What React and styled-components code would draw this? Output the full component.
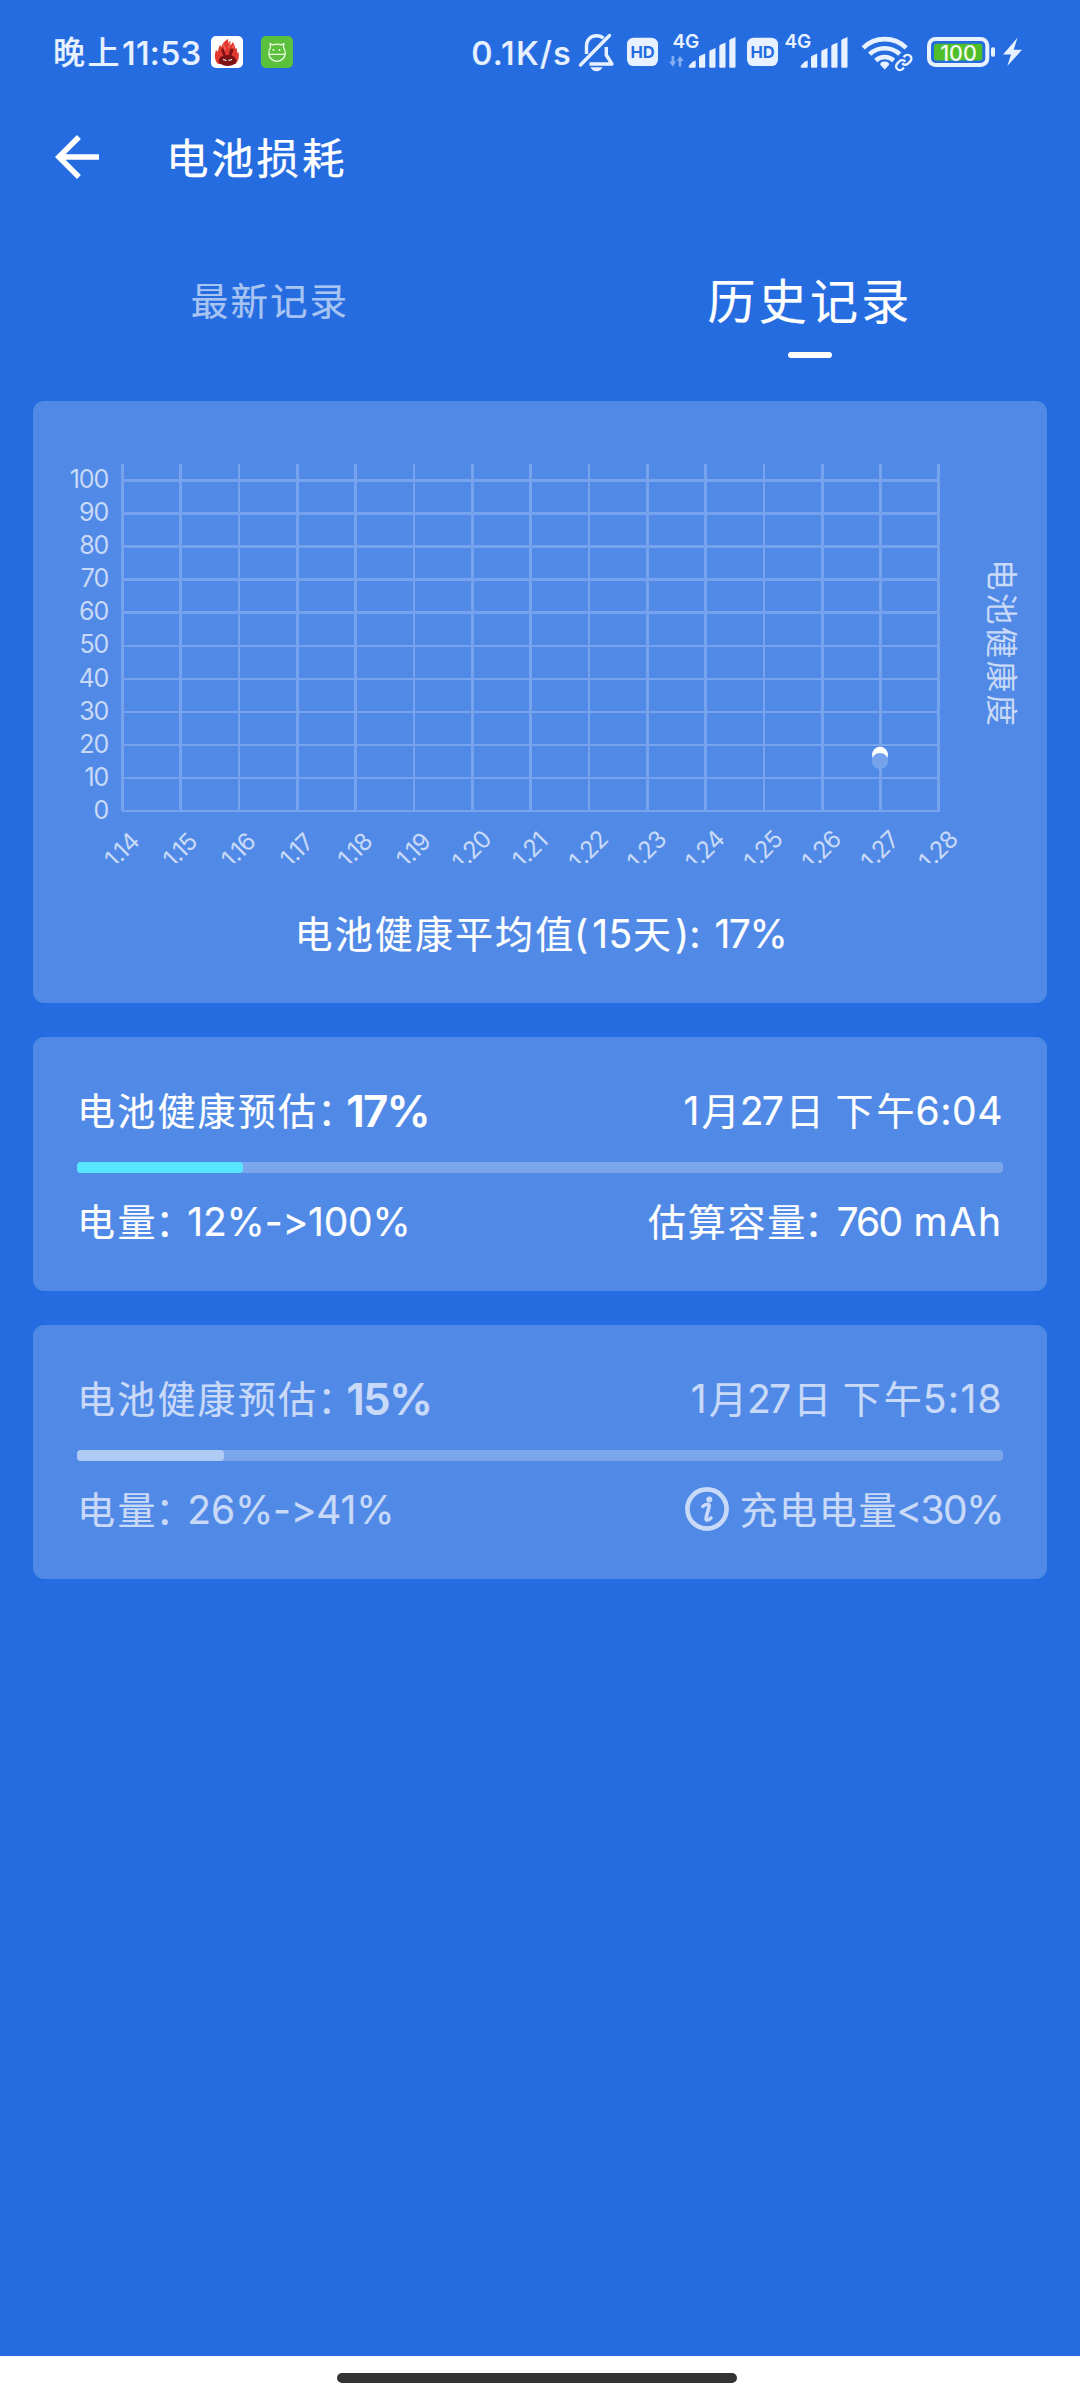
import React from 'react';
import styled, { createGlobalStyle } from 'styled-components';

const records = [
  {
    id: 1,
    health: '17%',
    fill: 17.9,
    hour: '6:04',
    hourGap: 0.56,
    from: '12%',
    to: '100%',
    capacity: '760',
  },
  {
    id: 2,
    health: '15%',
    fill: 15.9,
    hour: '5:18',
    hourGap: 1.3,
    from: '26%',
    to: '41%',
    dim: true,
  },
];

const days = [14, 15, 16, 17, 18, 19, 20, 21, 22, 23, 24, 25, 26, 27, 28];
const levels = [0, 10, 20, 30, 40, 50, 60, 70, 80, 90, 100];

// chart space: left/top of the card is 0,0
const xOf = (i) => 89.45 + i * 58.31;
const yOf = (v) => 410.19 - v * 3.307;

const HealthChart = () => {
  return (
    <ChartSvg width="945" height="462" viewBox="0 0 945 462">
      <g fill="none" stroke="#76a2ee" shapeRendering="crispEdges">
        {levels.map((v) => (
          <path key={v} d={`M${xOf(0)} ${yOf(v)}H${xOf(14) + 1}`} strokeWidth="2.6" />
        ))}
        {days.map((d, i) => (
          <path key={d} d={`M${xOf(i)} 63V410`} strokeWidth="2.7" />
        ))}
      </g>
      {levels.map((v) => (
        <AxisText key={v} x="75.2" y={yOf(v) + 7.6} textAnchor="end" $size={25} $gap={-1.1}>{v}</AxisText>
      ))}
      {days.map((d, i) => (
        <AxisText
          key={d}
          y="8.7"
          textAnchor="middle"
          $size={24}
          $gap={-0.8}
          transform={`translate(${xOf(i) - 1} 449) rotate(-45)`}
        >
          {`1.${d}`}
        </AxisText>
      ))}
      <circle cx="847" cy="353.8" r="8" fill="#fff" />
      <circle cx="847" cy="360" r="8" fill="#76a2ec" />
    </ChartSvg>
  );
};

const Hd = ({ left }) => (
  <StatusIcon $left={left} width="31" height="40" viewBox="0 0 31 40">
    <rect y="4.7" width="31" height="28.4" rx="6.5" fill="#e8f1ff" />
    <HdText x="15.6" y="25" textAnchor="middle">HD</HdText>
  </StatusIcon>
);

const Signal = ({ left, data }) => (
  <StatusIcon $left={left} width="68" height="40" viewBox="0 0 68 40">
    <NetText x="4.4" y="15.2">4G</NetText>
    {data && (
      <g fill="#85aff2">
        <path d="M3.6 23h2.600v5.500h1.800L4.900 33.700 1 28.500h2.600z" />
        <path d="M10.600 33.600h2.600v-5.500h2.600L11.900 23 8.800 28.100h1.800z" />
      </g>
    )}
    <g fill="#e8f1ff">
      <path d="M20.7 33l3.800-4.300 3.200-1.200v6.200q0 1-1 1h-5q-1 0-1-1z" />
      <path d="M31 24.500q0-1.300 1-1.800l5.200-2.200v13.200q0 1-1 1H32q-1 0-1-1z" />
      <path d="M41.300 19q0-1.300 1-1.800l5.200-2.200v18.700q0 1-1 1h-4.200q-1 0-1-1z" />
      <path d="M51.300 13.500q0-1.300 1-1.800l5.200-2.200v24.200q0 1-1 1h-4.200q-1 0-1-1z" />
      <path d="M61.300 8q0-1.300 1-1.800l5.200-2.200v29.700q0 1-1 1h-4.200q-1 0-1-1z" />
    </g>
  </StatusIcon>
);

const StatusBar = () => {
  return (
    <Status>
      <Run $size={32} $gap={2.5} $weight={500}>晚上</Run>
      <Run $size={33} $gap={0.2} $weight={500}>11:53</Run>
      <AppBadge $bg="#fff" $left={9.5}>
        <svg width="32" height="32" viewBox="0 0 32 32">
          <path d="M7 28C3 24 3.500 18 5 14l2 2c0-3 1-5 2-7l1.500 2C11 8 13 5 17 3c-.5 3 1 5 3 6l1.500-3c2 2 2.500 5 3 7l1-1c1 2 .5 4 .5 5l1.500-1c1 5 0 9-3 12z" fill="#e2382f" />
          <path d="M12 8l2 4-2 6M19 5l-1 7M23 9l-3 6" stroke="#f0675c" strokeWidth="1.4" fill="none" />
          <path d="M10.500 12.500c2-1 3 1.500 4 6.500h3.500c0-5 2-7.500 4-6 1 2-1 4-1.500 6.500 3.500 1 5.500 4 4.500 7-3 4.500-13.500 4.500-17 0C7 23.500 9.500 20.500 12.500 19.500c-1-2-2.500-4-2-7z" fill="#7c1216" />
          <path d="M12 23.500l3.500 1M21 23.500l-3.500 1" stroke="#fff" strokeWidth="1.3" />
        </svg>
      </AppBadge>
      <AppBadge $bg="#5bc13c" $left={18}>
        <svg width="32" height="32" viewBox="0 0 32 32" fill="none" stroke="#effbe9" strokeWidth="1.3">
          <path d="M9.500 11.500L9.200 7.800l2.600 1q4.200-1.500 8.400 0l2.600-1-.3 3.700q2 3 1.700 6A8.200 7.800 0 0 1 7.800 17.500q-.2-3 1.700-6z" />
          <path d="M8 18.300h16" />
          <circle cx="12.5" cy="14" r="1" fill="#effbe9" stroke="none" />
          <circle cx="18.5" cy="14" r="1" fill="#effbe9" stroke="none" />
        </svg>
      </AppBadge>

      <Spacer />

      <Run $size={33} $gap={1.15} $weight={500}>0.1K/s</Run>
      {/* muted bell */}
      <StatusIcon $left={6} width="37" height="40" viewBox="578 33 37 40" fill="none" stroke="#e8f1ff" strokeWidth="3.4">
        <path d="M586.500 54V45.500C586.500 39.500 591 35.800 596.500 35.800q4.500 0 7 2.500" />
        <path d="M606.300 47v8l5.700 9h-22.500" strokeLinejoin="round" />
        <path d="M609.500 35.500L580.500 65" strokeLinecap="round" />
        <path d="M590.500 67.200h12q-2 4-6 4t-6-4z" fill="#e8f1ff" stroke="none" />
      </StatusIcon>
      <Hd left={12} />
      <Signal left={10} data />
      <Hd left={11} />
      <Signal left={2} />
      <StatusIcon $left={13} width="52" height="40" viewBox="861 33 52 40" fill="none" stroke="#e8f1ff">
        <path d="M863.200 47.800a31 31 0 0 1 43 0" strokeWidth="4.6" />
        <path d="M869.600 54.200a22 22 0 0 1 30.200 0" strokeWidth="4.6" />
        <path d="M875.700 60.500a13.500 13.500 0 0 1 18 0" strokeWidth="4.4" />
        <path d="M884.700 69.500l-4.500-4.800q0-3.200 4.500-3.200t4.500 3.200z" fill="#e8f1ff" stroke="none" />
        <g transform="translate(894.5 53.2) scale(.77)" strokeWidth="3">
          <path d="M10 13a5 5 0 0 0 7.540.54l3-3a5 5 0 0 0-7.070-7.070l-1.720 1.710" />
          <path d="M14 11a5 5 0 0 0-7.540-.54l-3 3a5 5 0 0 0 7.070 7.070l1.710-1.710" />
        </g>
      </StatusIcon>
      <StatusIcon $left={13} width="70" height="40" viewBox="926 33 70 40">
        <rect x="929" y="38.9" width="58.3" height="26" rx="6.5" fill="none" stroke="#e8f1ff" strokeWidth="4" />
        <rect x="934" y="43.7" width="48.3" height="16.7" rx="2.5" fill="#50be29" />
        <rect x="991" y="47.3" width="4" height="9.4" rx="1.6" fill="#e8f1ff" />
        <BatteryText x="958.5" y="60.8" textAnchor="middle">100</BatteryText>
      </StatusIcon>
      <StatusIcon $left={6} width="21" height="40" viewBox="1002 33 21 40">
        <path d="M1017.500 37.700L1003 54.500h8l-3.700 11.500L1022 49.800h-8.300z" fill="#e8f1ff" />
      </StatusIcon>
    </Status>
  );
};

const Record = ({ record }) => {
  return (
    <RecordCard $dim={record.dim}>
      <Line>
        <div>
          <Run $gap={2.2}>电池健康预估</Run>
          <Colon $lead={-1}>：</Colon>
          <Percent>{record.health}</Percent>
        </div>
        <div>
          <Run $size={39}>1</Run>
          <Run $lead={2.4}>月</Run>
          <Run $size={39} $gap={-1.9}>27</Run>
          <Run $lead={4}>日 </Run>
          <Run $gap={3} $lead={1}>下午</Run>
          <Run $size={39} $gap={record.hourGap} $lead={-2}>{record.hour}</Run>
        </div>
      </Line>
      <Track>
        <Fill $dim={record.dim} style={{ width: `${record.fill}%` }} />
      </Track>
      <Line>
        <div>
          <Run $gap={2.4}>电量</Run>
          <Colon $lead={-2.5}>：</Colon>
          <Run $size={39} $gap={-0.2} $lead={13}>{record.from}-&gt;{record.to}</Run>
        </div>
        {record.capacity ? (
          <div>
            <Run $gap={1.7}>估算容量</Run>
            <Colon $lead={-3}>：</Colon>
            <Run $size={39} $gap={-1.8} $lead={13.5}>{record.capacity} </Run>
            <Run $size={39} $gap={1.8} $lead={3}>mAh</Run>
          </div>
        ) : (
          <div>
            <InfoIcon width="44" height="44" viewBox="0 0 44 44">
              <circle cx="22" cy="22" r="19.6" fill="none" stroke="currentColor" strokeWidth="4.6" />
              <circle cx="24.3" cy="12.4" r="3" fill="currentColor" />
              <path d="M17.800 19.400q3-2.600 5.400-2 1.400.700.700 3.200l-2.500 8.800q-.800 3 .5 3.600 1.600.400 4-2" fill="none" stroke="currentColor" strokeWidth="3.6" strokeLinecap="round" />
            </InfoIcon>
            <Run $gap={1.7}>充电电量</Run>
            <Run $size={39} $gap={-1.5} $lead={-2}>&lt;30%</Run>
          </div>
        )}
      </Line>
    </RecordCard>
  );
};

const App = () => {
  return (
    <Page>
      <GlobalStyle />
      <StatusBar />
      <Header>
        <BackIcon width="66" height="66" viewBox="0 0 24 24">
          <path d="M20 11H7.830l5.590-5.590L12 4l-8 8 8 8 1.410-1.410L7.830 13H20v-2z" fill="#fff" />
        </BackIcon>
        <Title>电池损耗</Title>
      </Header>
      <Tabs>
        <Tab>最新记录</Tab>
        <Tab $active>历史记录</Tab>
      </Tabs>
      <Content>
        <ChartCard>
          <ChartRow>
            <HealthChart />
            <SideLabel>电池健康度</SideLabel>
          </ChartRow>
          <Average>
            <Run $gap={2.1}>电池健康平均值</Run>
            <Run $size={39} $lead={-1.4}>(</Run>
            <Run $size={39} $gap={0.6} $lead={4}>15</Run>
            <Run>天</Run>
            <Run $size={39} $lead={4}>): </Run>
            <Run $size={39} $gap={-1.4} $lead={3}>17%</Run>
          </Average>
        </ChartCard>
        {records.map((record) => (
          <Record key={record.id} record={record} />
        ))}
      </Content>
      <NavBar>
        <Pill />
      </NavBar>
    </Page>
  );
};

const GlobalStyle = createGlobalStyle`
  body {
    margin: 0;
    background: #256ce0;
  }
  * {
    box-sizing: border-box;
  }
`;
const Page = styled.div`
  display: flex;
  flex-direction: column;
  width: 1080px;
  height: 2400px;
  background: #256ce0;
  color: #fff;
  font-family: Inter, 'Noto Sans CJK SC', sans-serif;
  font-feature-settings: 'calt' 0, 'liga' 0;
  white-space: pre;
`;
const Run = styled.span`
  margin-left: ${(p) => p.$lead || 0}px;
  font-size: ${(p) => p.$size || 38}px;
  font-weight: ${(p) => p.$weight || 400};
  letter-spacing: ${(p) => p.$gap || 0}px;
  line-height: 0;
  -webkit-text-stroke: 0.15px currentColor;
`;
const Colon = styled(Run)`
  font-feature-settings: 'halt' 1;
`;
const Status = styled.div`
  display: flex;
  align-items: center;
  height: 106px;
  padding: 0 57px 0 53px;
  color: #e8f1ff;
`;
const Spacer = styled.div`
  flex: 1;
`;
const StatusIcon = styled.svg`
  flex: none;
  margin-left: ${(p) => p.$left}px;
  overflow: visible;
`;
const AppBadge = styled.div`
  flex: none;
  width: 32px;
  height: 32px;
  margin-left: ${(p) => p.$left}px;
  margin-bottom: 2px;
  border-radius: 5px;
  background: ${(p) => p.$bg};
  overflow: hidden;
`;
const HdText = styled.text`
  fill: #256ce0;
  font-size: 16.5px;
  font-weight: 700;
`;
const NetText = styled.text`
  fill: #e8f1ff;
  font-size: 19px;
  font-weight: 600;
`;
const BatteryText = styled.text`
  fill: #f2fbef;
  font-size: 21.5px;
  font-weight: 500;
`;
const Header = styled.div`
  display: flex;
  align-items: center;
  height: 104px;
  padding-left: 44px;
`;
const BackIcon = styled.svg`
  margin-bottom: 2px;
`;
const Title = styled.div`
  margin-left: 56px;
  padding-top: 1px;
  font-size: 42.5px;
  letter-spacing: 2.8px;
  line-height: 60px;
  -webkit-text-stroke: 0.25px currentColor;
`;
const Tabs = styled.div`
  display: flex;
  height: 191px;
  padding-top: 62px;
`;
const Tab = styled.div`
  display: flex;
  flex-direction: column;
  align-items: center;
  width: 540px;
  font-size: ${(p) => (p.$active ? 48 : 37.5)}px;
  letter-spacing: ${(p) => (p.$active ? 3.2 : 2.1)}px;
  line-height: 60px;
  color: ${(p) => (p.$active ? '#fff' : '#a8c4f3')};
  -webkit-text-stroke: 0.2px currentColor;
  &::after {
    content: '';
    display: ${(p) => (p.$active ? 'block' : 'none')};
    width: 44px;
    height: 6px;
    margin-top: 20px;
    border-radius: 3px;
    background: #fff;
  }
`;
const Content = styled.div`
  display: flex;
  flex: 1;
  flex-direction: column;
  gap: 34px;
  padding: 0 33px;
`;
const Card = styled.div`
  border-radius: 11px;
  background: #508ae6;
`;
const ChartCard = styled(Card)`
  height: 602px;
`;
const ChartRow = styled.div`
  display: flex;
  height: 462px;
`;
const ChartSvg = styled.svg`
  flex: none;
  overflow: hidden;
`;
const AxisText = styled.text`
  fill: #c9d9f8;
  font-size: ${(p) => p.$size}px;
  letter-spacing: ${(p) => p.$gap}px;
`;
const SideLabel = styled.div`
  width: 46px;
  padding-top: 158px;
  color: #c9d9f8;
  font-size: 31.5px;
  letter-spacing: 2.4px;
  line-height: 46px;
  writing-mode: vertical-rl;
  text-orientation: sideways;
`;
const Average = styled.div`
  margin-top: 41px;
  padding-left: 1px;
  font-size: 39px;
  line-height: 60px;
  text-align: center;
`;
const RecordCard = styled(Card)`
  height: 254px;
  padding: 47px 44px 0;
  color: ${(p) => (p.$dim ? '#c9d9f8' : '#fff')};
`;
const Line = styled.div`
  display: flex;
  justify-content: space-between;
  height: 54px;
  font-size: 39px;
  line-height: 54px;
`;
const Percent = styled(Run)`
  margin-left: 10px;
  font-size: 44px;
  font-weight: 600;
  letter-spacing: -1.8px;
  vertical-align: -1.7px;
`;
const Track = styled.div`
  height: 11px;
  margin: 24px 0 22px;
  border-radius: 4px;
  background: #7ca6ec;
`;
const Fill = styled.div`
  height: 11px;
  border-radius: 4px;
  background: ${(p) => (p.$dim ? '#afcaf3' : '#58e6ff')};
`;
const InfoIcon = styled.svg`
  margin-right: 10px;
  vertical-align: -7px;
`;
const NavBar = styled.div`
  display: flex;
  justify-content: center;
  height: 44px;
  padding: 17px 7px 0 0;
  background: #fff;
`;
const Pill = styled.div`
  width: 400px;
  height: 10px;
  border-radius: 5px;
  background: #333;
`;

export default App;
